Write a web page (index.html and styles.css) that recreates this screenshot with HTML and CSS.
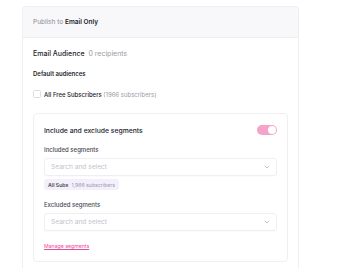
FILE: index.html
```html
<!DOCTYPE html>
<html lang="en">
<head>
  <meta charset="UTF-8">
  <meta name="viewport" content="width=device-width, initial-scale=1.0">
  <title>Publish</title>
  <link rel="stylesheet" href="styles.css">
</head>
<body>
  <div class="publish-card">
    <div class="publish-header"><span>Publish to <b>Email Only</b></span></div>

    <div class="publish-body">
      <div class="audience-title">Email Audience <span class="muted">0 recipients</span></div>
      <div class="section-label">Default audiences</div>

      <label class="check-row">
        <span class="checkbox"></span>
        <span class="check-text">All Free Subscribers <span class="muted">(1966 subscribers)</span></span>
      </label>

      <div class="segments-card">
        <div class="segments-head">
          <span class="segments-title">Include and exclude segments</span>
          <span class="toggle"><span class="knob"></span></span>
        </div>

        <div class="field-label">Included segments</div>
        <div class="select">
          <span class="placeholder">Search and select</span>
          <svg class="chevron" width="6" height="4" viewBox="0 0 6 4"><path d="M0.8 0.8 L3 3 L5.2 0.8" fill="none" stroke="#b5b5bd" stroke-width="0.8"/></svg>
        </div>
        <div class="chips">
          <span class="chip">All Subs <span class="chip-count">1,966 subscribers</span></span>
        </div>

        <div class="field-label">Excluded segments</div>
        <div class="select">
          <span class="placeholder">Search and select</span>
          <svg class="chevron" width="6" height="4" viewBox="0 0 6 4"><path d="M0.8 0.8 L3 3 L5.2 0.8" fill="none" stroke="#b5b5bd" stroke-width="0.8"/></svg>
        </div>

        <a class="manage-link" href="#">Manage segments</a>
      </div>
    </div>
  </div>
</body>
</html>
```

FILE: styles.css
```css
body {
  margin: 0;
  background-color: #ffffff;
  font-family: Inter, "Noto Sans", sans-serif;
  color: #24242c;
}

.publish-card {
  margin: 6px 0 0 22px;
  width: 277px;
  height: 262px;
  border: 1px solid #efeff2;
  border-bottom: none;
  border-radius: 4px 4px 0 0;
  box-sizing: border-box;
}

.publish-header {
  height: 30px;
  display: flex;
  align-items: center;
  padding-left: 10px;
  background-color: #f8f8fa;
  border-bottom: 1px solid #efeff2;
  border-radius: 4px 4px 0 0;
  font-size: 6.5px;
  color: #8a8a94;
}

.publish-header b {
  color: #24242c;
  font-weight: 600;
}

.publish-body {
  padding: 11px 10px;
}

.audience-title {
  font-size: 7px;
  font-weight: 500;
  height: 10px;
  line-height: 10px;
}

.muted {
  color: #9a9aa3;
  font-weight: 400;
  margin-left: 2px;
}

.section-label {
  margin-top: 10px;
  font-size: 6px;
  font-weight: 600;
  height: 10px;
  line-height: 10px;
}

.check-row {
  margin-top: 10px;
  display: flex;
  align-items: center;
  height: 10px;
}

.checkbox {
  width: 6px;
  height: 6px;
  border: 1px solid #dcdce2;
  border-radius: 1.5px;
  margin-right: 3px;
}

.check-text {
  font-size: 6px;
  font-weight: 500;
}

.check-text .muted {
  margin-left: 0;
}

.segments-card {
  margin-top: 14px;
  border: 1px solid #efeff2;
  border-radius: 4px;
  padding: 10px 10px 12px;
}

.segments-head {
  display: flex;
  justify-content: space-between;
  align-items: center;
  height: 12px;
}

.segments-title {
  font-size: 6.8px;
  font-weight: 500;
}

.toggle {
  width: 20px;
  height: 10px;
  border-radius: 5px;
  background-color: #f5a3cb;
  display: flex;
  justify-content: flex-end;
  align-items: center;
  padding-right: 1px;
  box-sizing: border-box;
}

.knob {
  width: 8px;
  height: 8px;
  border-radius: 50%;
  background-color: #ffffff;
}

.field-label {
  margin-top: 9px;
  font-size: 6px;
  font-weight: 500;
  color: #4a4a54;
  height: 10px;
  line-height: 10px;
}

.select {
  margin-top: 3px;
  height: 18px;
  border: 1px solid #efeff2;
  border-radius: 3px;
  box-sizing: border-box;
  display: flex;
  align-items: center;
  justify-content: space-between;
  padding: 0 6px;
  box-shadow: 0 1px 1px rgba(0, 0, 0, 0.02);
}

.placeholder {
  font-size: 6.6px;
  color: #c2c2ca;
}

.chips {
  margin-top: 3px;
  display: flex;
}

.chip {
  height: 11px;
  display: flex;
  align-items: center;
  padding: 0 4px;
  border-radius: 3px;
  background-color: #f3f0fc;
  font-size: 5.2px;
  font-weight: 600;
  color: #4a4a54;
}

.chip-count {
  font-weight: 400;
  color: #9a9aa3;
  margin-left: 3px;
}

.select + .chips + .field-label {
  margin-top: 10px;
}

.manage-link {
  display: block;
  margin-top: 12px;
  font-size: 5.2px;
  color: #ec4899;
  text-decoration: underline;
}
```
